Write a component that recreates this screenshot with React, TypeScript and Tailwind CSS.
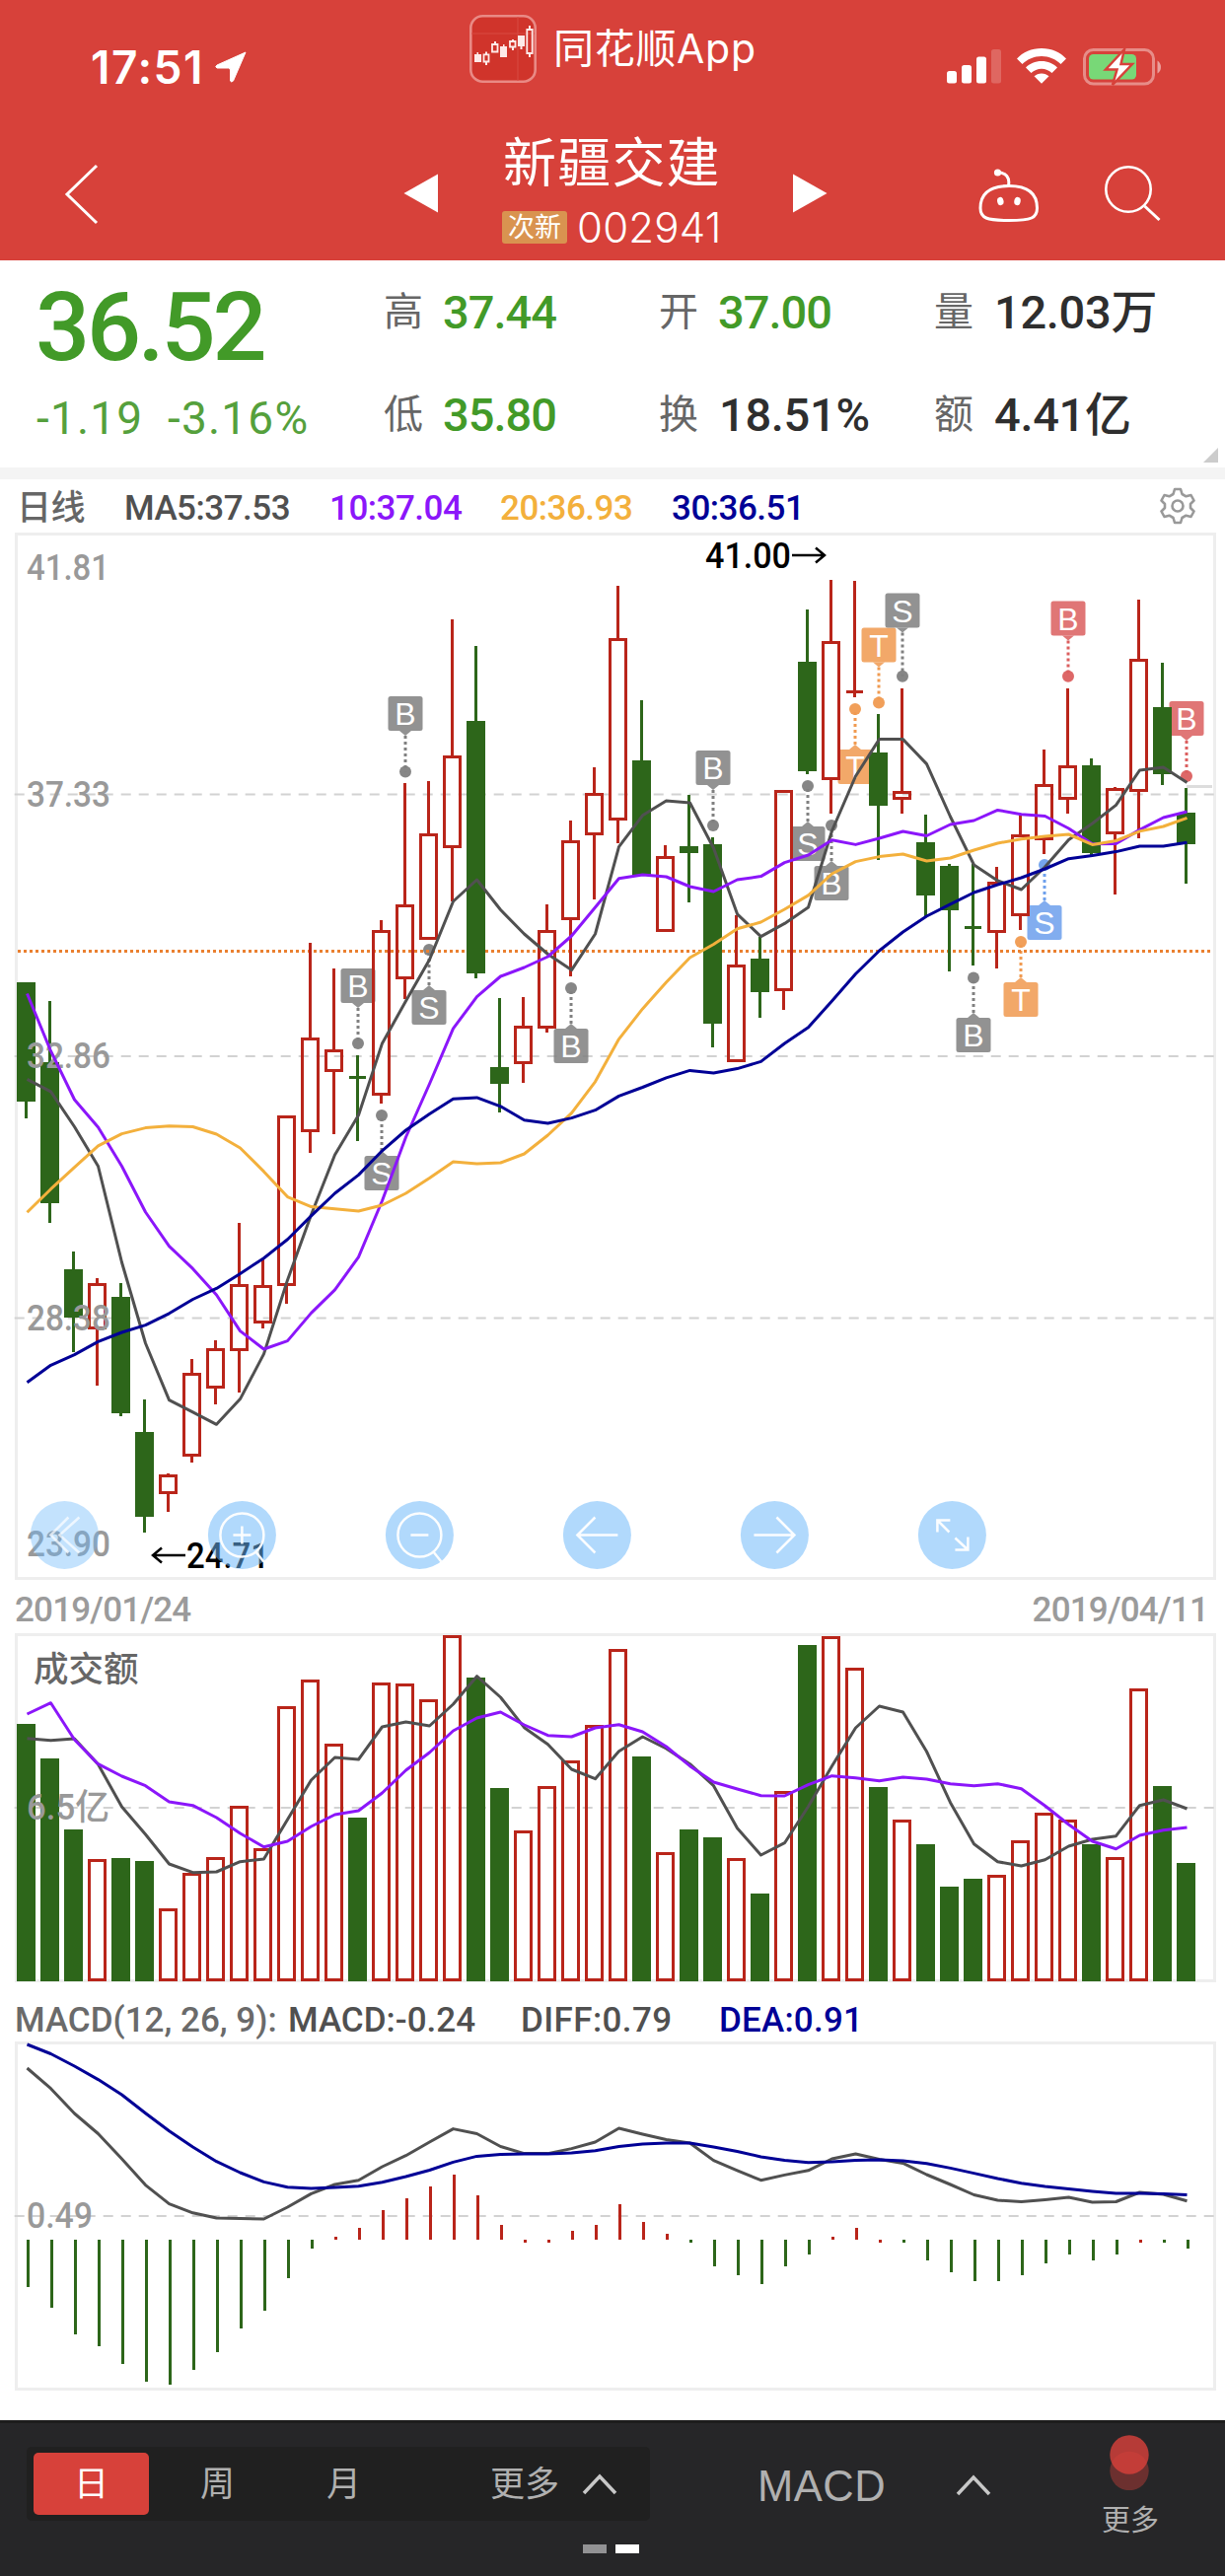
import type { ReactNode } from "react";

const GREEN = "#2d661a";
const RED = "#b9251a";
const STEP = 24;

type Kind = "up" | "down" | "dojiUp" | "dojiDown";
// kind, high, body top, body bottom, low (y positions)
type Candle = [Kind, number, number, number, number];

const candles: Candle[] = [
    ["down", 996, 996, 1117, 1134],
    ["down", 1015, 1077, 1220, 1240],
    ["down", 1269, 1287, 1336, 1371],
    ["up", 1296, 1301, 1348, 1405],
    ["down", 1301, 1315, 1433, 1436],
    ["down", 1419, 1452, 1538, 1554],
    ["up", 1494, 1495, 1515, 1533],
    ["up", 1378, 1392, 1477, 1483],
    ["up", 1359, 1367, 1408, 1424],
    ["up", 1240, 1302, 1370, 1412],
    ["up", 1277, 1303, 1342, 1347],
    ["up", 1131, 1131, 1304, 1322],
    ["up", 956, 1052, 1148, 1169],
    ["up", 982, 1064, 1087, 1150],
    ["dojiDown", 1070, 1091, 1094, 1157],
    ["up", 933, 943, 1111, 1119],
    ["up", 794, 917, 993, 1013],
    ["up", 792, 845, 953, 953],
    ["up", 628, 766, 860, 914],
    ["down", 655, 731, 987, 992],
    ["down", 1012, 1082, 1099, 1128],
    ["up", 1011, 1040, 1079, 1098],
    ["up", 917, 943, 1043, 1047],
    ["up", 832, 852, 933, 990],
    ["up", 778, 804, 847, 912],
    ["up", 594, 647, 832, 855],
    ["down", 710, 771, 887, 887],
    ["up", 857, 868, 945, 945],
    ["down", 806, 858, 865, 915],
    ["down", 849, 856, 1038, 1062],
    ["up", 928, 978, 1077, 1077],
    ["down", 950, 972, 1006, 1032],
    ["up", 801, 801, 1005, 1024],
    ["down", 618, 671, 782, 785],
    ["up", 588, 650, 791, 825],
    ["dojiUp", 589, 700, 703, 707],
    ["down", 724, 763, 817, 872],
    ["up", 698, 802, 811, 825],
    ["down", 826, 854, 908, 929],
    ["down", 876, 878, 923, 985],
    ["dojiDown", 876, 939, 942, 979],
    ["up", 879, 894, 946, 982],
    ["up", 826, 846, 929, 943],
    ["up", 760, 795, 852, 866],
    ["up", 698, 776, 811, 825],
    ["down", 769, 776, 865, 867],
    ["up", 798, 799, 846, 907],
    ["up", 608, 668, 803, 850],
    ["down", 672, 717, 785, 796],
    ["down", 799, 824, 856, 896],
];

const ma5 = [1094.3, 1106.8, 1142.5, 1182.5, 1280, 1362, 1419.6, 1431.8, 1444.3, 1418.6, 1372.9, 1297.9, 1231.8, 1171, 1130.7, 1057.9, 1015, 973, 914, 892, 922.5, 947, 967.5, 983.6, 947, 858.6, 826.8, 812, 814, 860, 926.8, 949.6, 936.4, 920, 842.5, 787, 749.6, 749.6, 774.6, 828, 877, 893, 902, 879, 851.4, 835, 816.4, 781, 778, 793.6];
const ma10 = [1007.5, 1065.7, 1115, 1143, 1182.5, 1229, 1263.6, 1286.4, 1313, 1349.6, 1368, 1359.6, 1331.4, 1307.9, 1274.6, 1217.5, 1153, 1099, 1042.9, 1010.7, 990, 981, 970, 949, 920, 890.7, 887, 889, 899, 904, 892, 888.6, 874.6, 867, 851.8, 856.4, 850, 843, 847.5, 836, 832, 821.4, 825.7, 827.5, 840, 855.7, 855.4, 841.4, 829, 823];
const ma20 = [1229.3, 1205.7, 1183.6, 1161.8, 1149.6, 1143.6, 1141.8, 1142.5, 1150, 1164, 1187.9, 1213.6, 1223.6, 1225.7, 1228, 1222, 1210, 1194.6, 1178, 1180, 1179, 1170, 1151, 1128.6, 1096.8, 1053.6, 1022.9, 996, 971, 957.5, 941.8, 935, 922, 907.9, 886, 873.6, 868.6, 866, 873, 870, 862, 855, 850.7, 847.9, 846, 856.4, 852.5, 842.9, 838, 829.3];
const ma30 = [1401.8, 1384.3, 1373.6, 1360.4, 1351, 1343.6, 1331.8, 1317.5, 1306.4, 1291.4, 1275.7, 1256.8, 1232.9, 1210, 1191.4, 1166.8, 1146, 1129.6, 1114.3, 1112.9, 1121.8, 1135.7, 1139, 1133.6, 1125.7, 1111.4, 1102.5, 1092.9, 1085.4, 1088, 1083.6, 1076.4, 1058, 1041.8, 1015, 987.5, 964, 945, 929, 916.8, 905, 897, 890, 881, 870.7, 867.5, 863.6, 858, 858, 854.3];

const volumes = [1748, 1783, 1855, 1885, 1884, 1887, 1935, 1899, 1883, 1831, 1874, 1730, 1703, 1768, 1843, 1706, 1707, 1723, 1658, 1701, 1813, 1856, 1811, 1785, 1749, 1672, 1781, 1878, 1855, 1863, 1884, 1920, 1816, 1668, 1659, 1691, 1812, 1845, 1870, 1913, 1905, 1901, 1866, 1838, 1845, 1870, 1883, 1712, 1811, 1889];
const vol5 = [1762.7, 1764.7, 1763, 1789, 1832, 1860, 1890, 1898.7, 1898, 1887.7, 1885, 1845, 1805, 1782, 1784, 1751, 1746, 1750, 1728, 1699.7, 1721, 1751.7, 1768.7, 1794, 1803.7, 1775.7, 1761, 1773, 1788.7, 1810.7, 1853.7, 1881, 1868.7, 1831.7, 1790.7, 1752, 1730, 1736, 1776, 1827.7, 1869.7, 1887.7, 1892, 1885.7, 1872, 1865, 1861.7, 1830.7, 1825, 1834];
const vol10 = [1738, 1726.7, 1764, 1788.7, 1801, 1810.7, 1827, 1830.7, 1843, 1859, 1872.7, 1867, 1852, 1840, 1836, 1818, 1795, 1777, 1755, 1742, 1736, 1749, 1759.7, 1761, 1752, 1748.7, 1756, 1771, 1790.7, 1807, 1814, 1820.7, 1821, 1809.7, 1800.7, 1802.7, 1805.7, 1802, 1804, 1808.7, 1810.7, 1808.7, 1813.7, 1831, 1850, 1867, 1874.7, 1861, 1855.7, 1853];

// bar length from the zero line, positive goes down
const macd = [48, 69, 96, 108, 126, 144, 147, 132, 114, 90, 72, 39, 9, -3, -12, -30, -42, -54, -66, -45, -15, 3, 3, -9, -15, -36, -18, -6, 3, 27, 36, 45, 27, 15, -3, -12, 3, 3, 21, 33, 42, 42, 36, 24, 15, 21, 15, 3, 3, 9];
const redBelowZero = [21, 22, 36, 47];
const diff = [2097, 2117.7, 2143, 2163.5, 2189, 2215.6, 2234.6, 2243.8, 2249, 2249.4, 2250, 2238, 2224.4, 2215, 2210.7, 2197, 2185.7, 2172, 2158.6, 2163.5, 2176.5, 2183.6, 2183.6, 2178.6, 2172, 2158, 2164, 2169.5, 2173, 2190.6, 2200.8, 2210.7, 2205.4, 2200.8, 2189, 2184, 2189.5, 2193.4, 2205, 2215, 2225.5, 2231, 2232.5, 2230.4, 2228, 2233, 2232.5, 2223, 2225, 2231.8];
const dea = [2073, 2082.5, 2095, 2108.6, 2124, 2142.7, 2160.7, 2177, 2191.7, 2203, 2212.4, 2217.7, 2219, 2218, 2216.7, 2212.8, 2207, 2200.5, 2192.4, 2186.4, 2184.6, 2184, 2184, 2183, 2180.7, 2176.5, 2174, 2173, 2173, 2177, 2181.5, 2187, 2190.6, 2192.7, 2192, 2190.6, 2190, 2191, 2193.8, 2198.4, 2203.6, 2209, 2213.8, 2217, 2219.5, 2222, 2224, 2224, 2224.4, 2225.5];

type Marker = { i: number; t: string; box: number; dot: number; c: string };
const GRAY = "#808080";
const ORANGE = "#f09a50";
const markers: Marker[] = [
    { i: 14, t: "B", box: 982, dot: 1058, c: GRAY },
    { i: 15, t: "S", box: 1172, dot: 1131, c: GRAY },
    { i: 16, t: "B", box: 706, dot: 782.5, c: GRAY },
    { i: 17, t: "S", box: 1004, dot: 963, c: GRAY },
    { i: 23, t: "B", box: 1043, dot: 1002, c: GRAY },
    { i: 29, t: "B", box: 761, dot: 837, c: GRAY },
    { i: 33, t: "S", box: 838, dot: 797, c: GRAY },
    { i: 34, t: "B", box: 878, dot: 837, c: GRAY },
    { i: 35, t: "T", box: 760, dot: 719, c: ORANGE },
    { i: 36, t: "T", box: 636.5, dot: 712.5, c: ORANGE },
    { i: 37, t: "S", box: 601.5, dot: 685.7, c: GRAY },
    { i: 40, t: "B", box: 1032, dot: 991.5, c: GRAY },
    { i: 42, t: "T", box: 996, dot: 955, c: ORANGE },
    { i: 43, t: "S", box: 918, dot: 877, c: "#6ea0ec" },
    { i: 44, t: "B", box: 609.5, dot: 685.7, c: "#db5f5f" },
    { i: 49, t: "B", box: 711, dot: 787, c: "#db5f5f" },
];

function Line({ data, color }: { data: number[]; color: string }) {
    return (
        <polyline
            points={data.map((y, i) => `${27.5 + i * STEP},${y}`).join(" ")}
            fill="none"
            stroke={color}
            strokeWidth="3"
            strokeLinejoin="round"
        />
    );
}

function Grid({ y }: { y: number }) {
    return <path d={`M14.7 ${y}H1233`} stroke="#d2d2d2" strokeWidth="2" strokeDasharray="10 8" />;
}

function Frame({ y, h }: { y: number; h: number }) {
    return <rect x="16.5" y={y + 1.5} width="1215" height={h - 3} fill="none" stroke="#eeeeee" strokeWidth="3" />;
}

type LabelProps = { x: number; y: number; w: number; fill?: string; children: ReactNode };

function Label({ x, y, w, fill = "#999999", children }: LabelProps) {
    return (
        <text x={x} y={y} textLength={w} lengthAdjust="spacingAndGlyphs" fontSize="36" fontWeight="500" fill={fill}>
            {children}
        </text>
    );
}

function CandleBar({ candle, i }: { candle: Candle; i: number }) {
    const [kind, high, top, bottom, low] = candle;
    const x = 17 + i * STEP;
    const color = kind === "up" || kind === "dojiUp" ? RED : GREEN;
    if (kind === "dojiUp" || kind === "dojiDown") {
        return (
            <g fill={color}>
                <rect x={x + 8} y={high} width="3" height={low - high} />
                <rect x={x + 1} y={top} width="17" height="3" />
            </g>
        );
    }
    return (
        <g fill={color}>
            <rect x={x + 8} y={high} width="3" height={top - high} />
            <rect x={x + 8} y={bottom} width="3" height={low - bottom} />
            {kind === "up" ? (
                <rect x={x + 1.5} y={top + 1.5} width="16" height={bottom - top - 3} fill="none" stroke={color} strokeWidth="3" />
            ) : (
                <rect x={x} y={top} width="19" height={bottom - top} />
            )}
        </g>
    );
}

function TradeMarker({ i, t, box, dot, c }: Marker) {
    const x = 27 + i * STEP;
    const above = box < dot;
    const edge = above ? box + 35 : box;
    const tip = above ? edge + 5 : edge - 5;
    return (
        <g fill={c}>
            <path d={`M${x} ${tip}V${dot}`} stroke={c} strokeWidth="3" strokeDasharray="3 3" />
            <circle cx={x} cy={dot} r="6" opacity=".95" />
            <rect x={x - 17.5} y={box} width="35" height="35" rx="2.5" opacity=".86" />
            <path d={`M${x - 6} ${edge}L${x} ${tip}L${x + 6} ${edge}Z`} opacity=".86" />
            <text x={x} y={box + 29} textAnchor="middle" fontSize="32" fill="white" className="font-[family-name:'Liberation_Sans',sans-serif]">
                {t}
            </text>
        </g>
    );
}

function PriceChart() {
    const buttons = [
        <path d="M4-18L-14 0L4 18M15-18L-5 0L15 18" />,
        <>
            <circle r="22" />
            <path d="M-9 0H9M0-9V9M14 17L22 27" />
        </>,
        <>
            <circle r="22" />
            <path d="M-9 0H9M14 17L22 27" />
        </>,
        <path d="M21 0H-20M-2-18L-20 0L-2 18" />,
        <path d="M-21 0H20M2-18L20 0L2 18" />,
        <path d="M-15-3V-15H-2M-15-15L-3-3M3 3L16 15M3 15H16V2" />,
    ];
    return (
        <svg viewBox="0 540 1242 1062" className="block h-[1062px] w-[1242px] shrink-0">
            <Frame y={540} h={1062} />
            <Grid y={805.5} />
            <Grid y={1071} />
            <Grid y={1336.5} />
            {markers.map((m) => (
                <TradeMarker key={m.i} {...m} />
            ))}
            <path d="M18 964.5H1229" stroke="#ea8030" strokeWidth="3" strokeDasharray="3 3" />
            <path d="M1203 797.5H1229" stroke="#dddddd" strokeWidth="3" />
            {candles.map((candle, i) => (
                <CandleBar key={i} candle={candle} i={i} />
            ))}
            <Label x={27} y={588} w={84}>41.81</Label>
            <Label x={27} y={818} w={85}>37.33</Label>
            <Label x={27} y={1083} w={85}>32.86</Label>
            <Label x={27} y={1349} w={85}>28.38</Label>
            <Label x={27} y={1578} w={85}>23.90</Label>
            <Line data={ma5} color="#505050" />
            <Line data={ma10} color="#8b16fa" />
            <Line data={ma20} color="#f3b03c" />
            <Line data={ma30} color="#000096" />
            <Label x={715} y={576} w={87} fill="#000000">41.00</Label>
            <path d="M803 563H836M827 555.5L836 563L827 570.5" fill="none" stroke="black" strokeWidth="2.5" />
            <Label x={189} y={1590} w={84} fill="#000000">24.71</Label>
            <path d="M188 1577H155M164 1569.5L155 1577L164 1584.5" fill="none" stroke="black" strokeWidth="2.5" />
            {buttons.map((icon, i) => (
                <g key={i} transform={`translate(${65.4 + i * 180} 1556.5)`}>
                    <circle r="34.5" fill="#69b6f9" opacity={i === 0 ? 0.4 : 0.52} />
                    <g fill="none" stroke="white" strokeWidth="2.5" opacity={i === 0 ? 0.7 : 0.95}>
                        {icon}
                    </g>
                </g>
            ))}
        </svg>
    );
}

function VolumeChart() {
    return (
        <svg viewBox="0 1656 1242 354" className="block h-[354px] w-[1242px] shrink-0">
            <Frame y={1656} h={354} />
            <Grid y={1833} />
            {volumes.map((y, i) => {
                const x = 17 + i * STEP;
                return candles[i][0] === "up" || candles[i][0] === "dojiUp" ? (
                    <rect key={i} x={x + 1.5} y={y + 1.5} width="16" height={2007.5 - y - 1.5} fill="none" stroke={RED} strokeWidth="3" />
                ) : (
                    <rect key={i} x={x} y={y} width="19" height={2009 - y} fill={GREEN} />
                );
            })}
            <text x="34" y="1705" fontSize="35.5" fontWeight="500" fill="#666666">成交额</text>
            <Label x={27} y={1845} w={84}>6.5亿</Label>
            <Line data={vol5} color="#505050" />
            <Line data={vol10} color="#8b16fa" />
        </svg>
    );
}

function MacdChart() {
    return (
        <svg viewBox="0 2070 1242 354" className="block h-[354px] w-[1242px] shrink-0">
            <Frame y={2070} h={354} />
            <Grid y={2247} />
            {macd.map((len, i) => (
                <rect
                    key={i}
                    x={27 + i * STEP}
                    y={len < 0 ? 2271 + len : 2271}
                    width="3"
                    height={Math.abs(len)}
                    fill={len < 0 || redBelowZero.includes(i) ? RED : GREEN}
                />
            ))}
            <Label x={27} y={2259} w={67}>0.49</Label>
            <Line data={diff} color="#505050" />
            <Line data={dea} color="#000096" />
        </svg>
    );
}

function StatusBar() {
    return (
        <div className="flex h-[110px] items-start text-white">
            <div className="ml-[92px] mt-[40px] w-[126px] font-[family-name:Inter,sans-serif] text-[46px] font-semibold leading-[56px] tracking-[1.5px]">17:51</div>
            <svg viewBox="0 0 32 32" className="mt-[52px] h-[32px] w-[32px]" fill="white" stroke="white" strokeLinejoin="round">
                <path d="M31 1L18.500 30Q16.500 32 15.500 30V19Q15.500 17 13.500 17H2Q-0.500 16 2 14Z" />
            </svg>
            <svg viewBox="0 0 68 69" className="ml-[226px] mt-[15px] h-[69px] w-[68px]">
                <rect x="1.300" y="1.300" width="65.400" height="66.400" rx="12" fill="#d0342b" stroke="#e98a85" strokeWidth="2.600" />
                <path d="M2 19H66M49 2V67" stroke="#d84a42" strokeWidth="1" />
                <g fill="#fdeae8">
                    <path d="M5 40H12V48H5ZM7.500 38H9V40H7.500ZM31 32H38V43H31ZM34 30H35.500V32H34ZM49 21H56V32H49ZM51.500 32H53.500V35H51.500Z" />
                    <path d="M16 37.500H18V40H16ZM16 48H18V51H16ZM25 27H27V30H25ZM43 25H45V27H43ZM43 33H45V36H43ZM60 11H62V15H60ZM60 40H62V43H60Z" />
                </g>
                <g fill="none" stroke="#fdeae8" strokeWidth="1.800">
                    <path d="M14.500 40.300H19.500V47.500H14.500ZM23 30H28.500V37.500H23ZM41 27H46.500V32.500H41ZM58.300 15H63.700V39H58.300Z" />
                </g>
            </svg>
            <div className="ml-[17px] mt-[19px] w-[399px] whitespace-nowrap font-[family-name:Inter,'Noto_Sans_CJK_SC',sans-serif] text-[41px] leading-[60px] tracking-[0.7px]">同花顺App</div>
            <svg viewBox="0 0 56 36" className="mt-[49px] h-[36px] w-[56px]" fill="white">
                <rect x="0" y="23" width="10" height="12.500" rx="2.500" />
                <rect x="15" y="17" width="10" height="18.500" rx="2.500" />
                <rect x="30" y="8.500" width="10" height="27" rx="2.500" />
                <rect x="45" y="1" width="10" height="34.500" rx="2.500" opacity=".2" />
            </svg>
            <svg viewBox="0 0 50 36" className="ml-[15px] mt-[49px] h-[36px] w-[50px]" fill="white">
                <path d="M25 0C15 0 6 4 0 10.500L5.500 16C10.500 11 17.500 8 25 8S39.500 11 44.500 16L50 10.500C44 4 35 0 25 0Z" />
                <path d="M25 13C18.500 13 13 15.500 9 19.500L14.500 25C17.300 22.300 21 20.700 25 20.700S32.700 22.300 35.500 25L41 19.500C37 15.500 31.500 13 25 13Z" />
                <path d="M25 25.500C22 25.500 19.500 26.700 17.500 28.300L25 35.800L32.500 28.300C30.500 26.700 28 25.500 25 25.500Z" />
            </svg>
            <svg viewBox="0 0 80 38" className="ml-[17px] mt-[49px] h-[38px] w-[80px]">
                <rect x="1.500" y="1.500" width="70" height="34.500" rx="9" fill="none" stroke="white" strokeWidth="3" opacity=".4" />
                <path d="M75.500 12.500Q79 15 79 19T75.500 25.500Z" fill="white" opacity=".5" />
                <rect x="6" y="6" width="48" height="25.500" rx="4.500" fill="#78d877" />
                <path d="M42 1L23 21.500H34.500L30 37L50 16H38.500Z" fill="white" stroke="#d7413a" strokeWidth="2.500" />
            </svg>
        </div>
    );
}

function Header() {
    return (
        <header className="h-[264px] shrink-0 bg-[#d7413a]">
            <StatusBar />
            <div className="flex h-[154px] items-start text-white">
                <svg viewBox="0 0 36 62" className="ml-[65px] mt-[56px] h-[62px] w-[36px]" fill="none" stroke="white" strokeWidth="3">
                    <path d="M33 2L3 31L33 60" />
                </svg>
                <svg viewBox="0 0 36 40" className="ml-[308px] mt-[66px] h-[40px] w-[36px]" fill="white">
                    <path d="M35 0.500V39.500L0.500 20Z" />
                </svg>
                <div className="ml-[64px] mt-[16px] w-[231px] font-[family-name:Inter,'Noto_Sans_CJK_SC',sans-serif]">
                    <div className="h-[80px] pl-px text-[54px] leading-[80px] tracking-[1.2px]">新疆交建</div>
                    <div className="mt-[8px] flex">
                        <span className="h-[33px] w-[66px] rounded-[3px] bg-[#d99350] text-center text-[27px] leading-[33px]">次新</span>
                        <span className="ml-[10px] text-[42px] font-light leading-[33px] tracking-[0.2px]">002941</span>
                    </div>
                </div>
                <svg viewBox="0 0 36 40" className="ml-[63px] mt-[66px] h-[40px] w-[36px]" fill="white">
                    <path d="M1 0.500V39.500L35.500 20Z" />
                </svg>
                <svg viewBox="0 0 62 56" className="ml-[153px] mt-[60px] h-[56px] w-[62px]" fill="none" stroke="white" strokeWidth="3">
                    <path d="M31 18.500C50 18.500 59.500 26 59.500 41C59.500 51 54 53.500 31 53.500S2 51 2 41C2 26 12 18.500 31 18.500Z" />
                    <path d="M20 5C28 5 32 10 30.500 18" />
                    <circle cx="19.500" cy="5" r="3.600" fill="white" stroke="none" />
                    <ellipse cx="22.300" cy="34" rx="3.200" ry="4.200" transform="rotate(-12 22.300 34)" fill="white" stroke="none" />
                    <ellipse cx="39.500" cy="34" rx="3.200" ry="4.200" transform="rotate(12 39.500 34)" fill="white" stroke="none" />
                </svg>
                <svg viewBox="0 0 58 58" className="ml-[66px] mt-[58px] h-[58px] w-[58px]" fill="none" stroke="white" strokeWidth="2.600">
                    <circle cx="24" cy="24" r="22.700" />
                    <path d="M40.500 41L55.500 55" strokeWidth="3" />
                </svg>
            </div>
        </header>
    );
}

function Stat({ name, value, dark }: { name: string; value: string; dark?: boolean }) {
    return (
        <div className="flex leading-[60px]">
            <span className="mt-px w-[60px] text-[40px] text-[#666666]">{name}</span>
            <span
                className={
                    dark
                        ? "ml-px mt-px text-[47px] font-medium tracking-[-0.3px] text-[#2e2e2e]"
                        : "mt-px text-[47px] font-medium tracking-[-1px] text-[#429a28]"
                }
            >
                {value}
            </span>
        </div>
    );
}

function Quote() {
    return (
        <section className="relative flex h-[210px] shrink-0">
            <div className="ml-[36px] w-[353px] text-[#429a28]">
                <div className="mt-[18px] h-[100px] text-[97px] font-medium leading-[100px] tracking-[-3.2px]">36.52</div>
                <div className="mt-[12px] flex text-[46px] leading-[60px] tracking-[1.2px] text-[#55a03c]">
                    <span className="ml-px w-[133px]">-1.19</span>
                    <span>-3.16%</span>
                </div>
            </div>
            <div className="mt-[22px] flex w-[279px] flex-col gap-[43px]">
                <Stat name="高" value="37.44" />
                <Stat name="低" value="35.80" />
            </div>
            <div className="mt-[22px] flex w-[279px] flex-col gap-[43px]">
                <Stat name="开" value="37.00" />
                <Stat name="换" value="18.51%" dark />
            </div>
            <div className="mt-[22px] flex flex-col gap-[43px]">
                <Stat name="量" value="12.03万" dark />
                <Stat name="额" value="4.41亿" dark />
            </div>
            <svg viewBox="0 0 15 15" className="absolute bottom-[5px] right-[7px] h-[15px] w-[15px]">
                <path d="M15 0V15H0Z" fill="#cccccc" />
            </svg>
        </section>
    );
}

function BottomBar() {
    return (
        <footer className="flex h-[158px] shrink-0 flex-col border-t-[3px] border-[#1c1c1c] bg-[#262628] text-[#b0b0b0]">
            <div className="flex h-[117px] items-start">
                <div className="ml-[27px] mt-[24px] flex h-[75px] w-[632px] items-center rounded-[5px] bg-[#202020] pl-[7px] text-[35px]">
                    <span className="h-[63px] w-[117px] rounded-[5px] bg-[#d7413a] text-center leading-[65px] text-white">日</span>
                    <span className="ml-[52px] mt-[3px] w-[36px]">周</span>
                    <span className="ml-[92px] mt-[3px] w-[36px]">月</span>
                    <span className="ml-[130px] mt-[3px] w-[72px]">更多</span>
                    <svg viewBox="0 0 36 22" className="ml-[21px] h-[22px] w-[36px]" fill="none" stroke="#c8c8c8" strokeWidth="3.500">
                        <path d="M2 20L18 3L34 20" />
                    </svg>
                </div>
                <span className="ml-[109px] mt-[31px] w-[201px] font-[family-name:'Liberation_Sans',sans-serif] text-[43.500px] leading-[66px] tracking-[0.5px]">MACD</span>
                <svg viewBox="0 0 36 22" className="mt-[52px] h-[22px] w-[36px]" fill="none" stroke="#c8c8c8" strokeWidth="3.500">
                    <path d="M2 20L18 3L34 20" />
                </svg>
                <div className="ml-[103px] mt-[12px] flex w-[76px] flex-col items-center">
                    <svg viewBox="0 0 40 56" className="mr-[3px] h-[56px] w-[40px]" fill="#d7413a">
                        <circle cx="20" cy="36.500" r="19.700" opacity=".4" />
                        <circle cx="20" cy="20" r="19.700" opacity=".82" />
                    </svg>
                    <span className="mt-[9px] text-[29px] leading-[44px]">更多</span>
                </div>
            </div>
            <div className="mt-[6px] flex gap-[9px] pl-[591px]">
                <i className="h-[9px] w-[24px] bg-[#929294]" />
                <i className="h-[9px] w-[24px] bg-white" />
            </div>
        </footer>
    );
}

export default function App() {
    return (
        <div className="flex h-[2612px] w-[1242px] flex-col overflow-hidden bg-white font-[family-name:Roboto,'Noto_Sans_CJK_SC',sans-serif]">
            <Header />
            <Quote />
            <div className="h-[12px] shrink-0 bg-[#f4f4f4]" />

            {/* Moving averages */}
            <div className="flex h-[54px] shrink-0 items-center text-[35px] font-medium leading-[54px] tracking-[-0.5px]">
                <span className="ml-[17px] mt-[5px] w-[109px] text-[35px] text-[#666666]">日线</span>
                <span className="mt-[6px] w-[208px] text-[#505050]">MA5:37.53</span>
                <span className="mt-[6px] w-[173px] text-[#8b16fa]">10:37.04</span>
                <span className="mt-[6px] w-[174px] text-[#f3b03c]">20:36.93</span>
                <span className="mt-[6px] w-[494px] text-[#000096]">30:36.51</span>
                <svg viewBox="0 0 38 38" className="h-[38px] w-[38px]" fill="none" stroke="#999999" strokeWidth="2.600" strokeLinejoin="round">
                    <path d="M16 2H22L23.500 7L27.500 9.300L32.500 8L35.500 13.500L32 17V21L35.500 24.500L32.500 30L27.500 28.700L23.500 31L22 36H16L14.500 31L10.500 28.700L5.500 30L2.500 24.500L6 21V17L2.500 13.500L5.500 8L10.500 9.300L14.500 7Z" />
                    <circle cx="19" cy="19" r="5.500" />
                </svg>
            </div>

            <PriceChart />
            <div className="flex h-[54px] shrink-0 justify-between pl-[15px] pr-[17px] pt-[4px] text-[35px] font-medium leading-[54px] tracking-[-0.8px] text-[#9b9b9b]">
                <span>2019/01/24</span>
                <span>2019/04/11</span>
            </div>
            <VolumeChart />

            <div className="flex h-[60px] shrink-0 pt-[11px] text-[35px] font-medium leading-[56px] text-[#505050]">
                <span className="ml-[15px] w-[277px] text-[#6a6a6a]">MACD(12, 26, 9):</span>
                <span className="w-[236px]">MACD:-0.24</span>
                <span className="w-[201px] tracking-[0.4px]">DIFF:0.79</span>
                <span className="tracking-[0.2px] text-[#000096]">DEA:0.91</span>
            </div>
            <MacdChart />
            <div className="grow" />
            <BottomBar />
        </div>
    );
}
